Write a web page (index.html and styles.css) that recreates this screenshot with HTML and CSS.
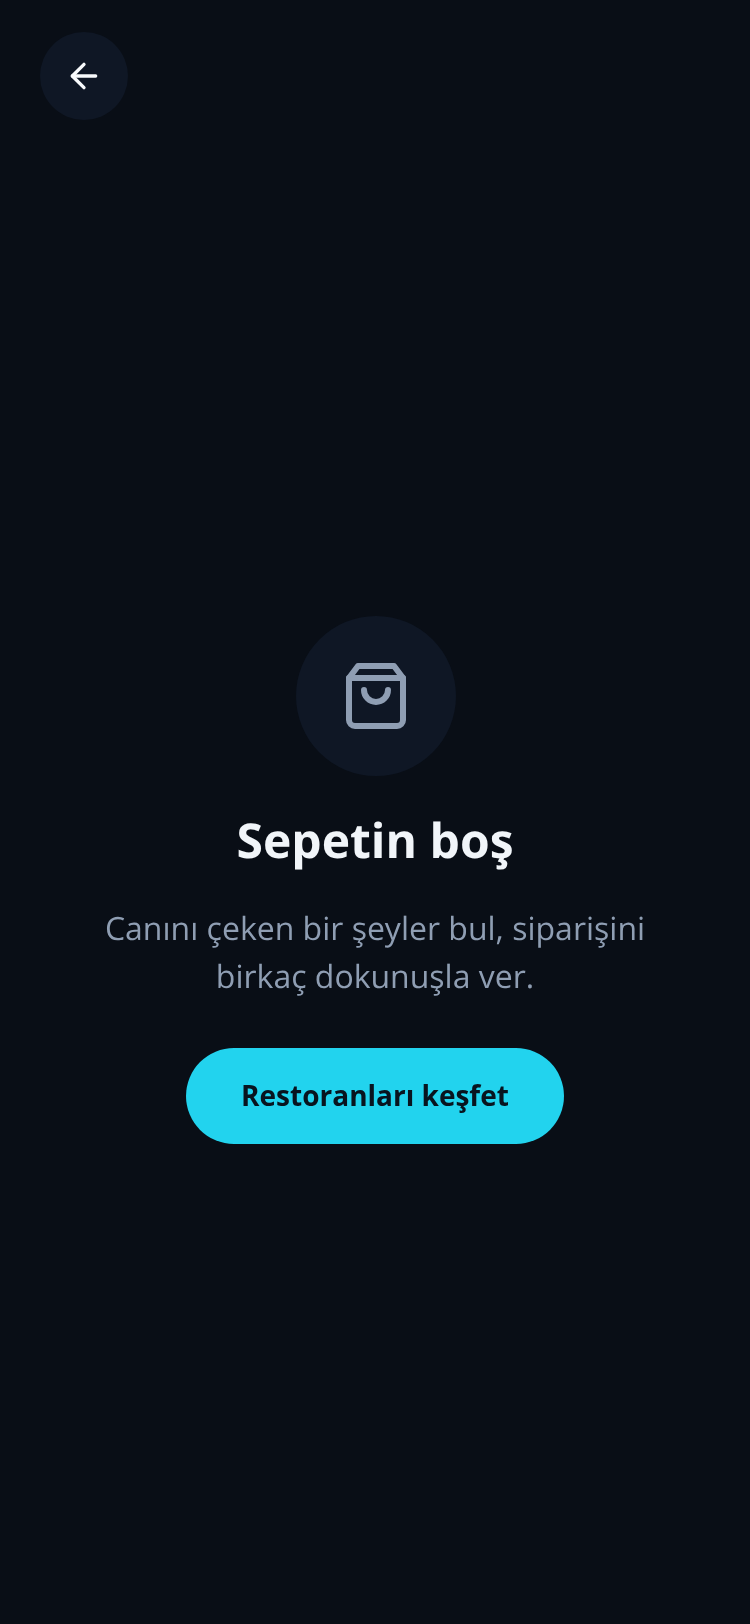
FILE: index.html
```html
<!DOCTYPE html>
<html lang="tr">
<head>
<meta charset="utf-8">
<title>Sepet</title>
<link rel="stylesheet" href="styles.css">
</head>
<body>
<div class="screen">
  <header class="header">
    <button class="back" type="button" aria-label="Geri">
      <svg class="back-icon" viewBox="0 0 24 24" fill="none" stroke="currentColor" stroke-width="2" stroke-linecap="round" stroke-linejoin="round"><path d="M19 12H5"/><path d="M12 19l-7-7 7-7"/></svg>
    </button>
  </header>
  <main class="empty">
    <div class="empty-circle">
      <svg class="bag-icon" viewBox="0 0 24 24" fill="none" stroke="currentColor" stroke-width="2" stroke-linecap="round" stroke-linejoin="round"><path d="M6 2 3 6v14a2 2 0 0 0 2 2h14a2 2 0 0 0 2-2V6l-3-4Z"/><path d="M3 6h18"/><path d="M16 10a4 4 0 0 1-8 0"/></svg>
    </div>
    <h1 class="title">Sepetin boş</h1>
    <p class="desc">Canını çeken bir şeyler bul, siparişini birkaç dokunuşla ver.</p>
    <button class="cta" type="button">Restoranları keşfet</button>
  </main>
</div>
</body>
</html>
```

FILE: styles.css
```css
* { box-sizing: border-box; }
html, body { margin: 0; height: 100%; }
body {
  background: #090e16;
  font-family: "Open Sans", sans-serif;
  text-rendering: geometricPrecision;
}
.screen {
  min-height: 1624px;
  display: flex;
  flex-direction: column;
}
.header {
  padding: 32px 40px 16px;
  display: flex;
}
.back {
  width: 88px;
  height: 88px;
  border: 0;
  padding: 0;
  border-radius: 50%;
  background: #0f1725;
  color: #f8fafc;
  display: flex;
  align-items: center;
  justify-content: center;
}
.back-icon { width: 40px; height: 40px; }
.empty {
  flex: 1;
  display: flex;
  flex-direction: column;
  align-items: center;
  justify-content: center;
  padding: 0 48px;
  text-align: center;
  will-change: opacity;
}
.empty-circle {
  width: 160px;
  height: 160px;
  margin-left: 2px;
  border-radius: 50%;
  background: #0f1725;
  color: #8f9eb3;
  display: flex;
  align-items: center;
  justify-content: center;
}
.bag-icon { width: 72px; height: 72px; }
.title {
  margin: 35px 0 0;
  font-size: 48px;
  line-height: 60px;
  font-weight: 700;
  color: #f1f5f9;
}
.desc {
  margin: 34px 0 0;
  max-width: 560px;
  font-size: 32px;
  line-height: 48px;
  color: #8f9eb3;
}
.cta {
  margin-top: 47px;
  width: 378px;
  height: 96px;
  border: 0;
  padding: 0 0 2px;
  border-radius: 48px;
  background: #22d3ee;
  color: #08141f;
  font-family: inherit;
  font-size: 28px;
  font-weight: 700;
}
```
